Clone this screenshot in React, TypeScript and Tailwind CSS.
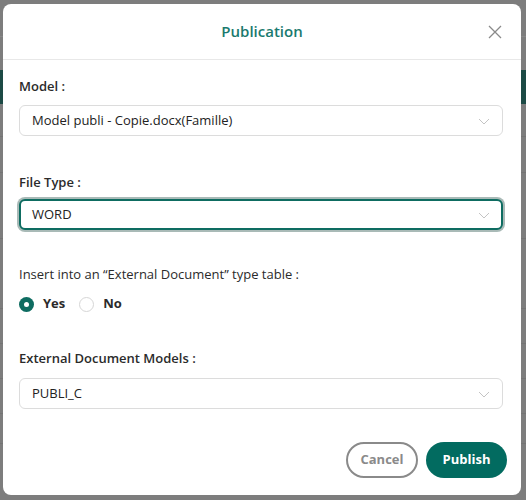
import React, { useState } from "react";
import clsx from "clsx";

const font = { fontFamily: '"Open Sans", "Noto Sans", Arial, sans-serif' };

function Chevron() {
  return (
    <svg width="12" height="12" viewBox="0 0 12 12" className="shrink-0">
      <path d="M1 4l5 5 5-5" fill="none" stroke="#c4c4c4" strokeWidth="1" />
    </svg>
  );
}

function Select({ value, focused }: { value: string; focused?: boolean }) {
  return (
    <div
      className={clsx(
        "flex items-center justify-between h-[31px] rounded-md bg-white text-[13px] text-[#222]",
        focused
          ? "border-2 border-[#0e6c61] shadow-[0_0_0_2px_#a9bab7] pl-[11px] pr-[11px]"
          : "border border-[#dcdcdc] pl-3 pr-3"
      )}
    >
      <span>{value}</span>
      <Chevron />
    </div>
  );
}

function Label({ children, bold = true }: { children: React.ReactNode; bold?: boolean }) {
  return (
    <div
      className={clsx(
        "h-5 leading-5 text-[13px] text-[#2b2b2b]",
        bold ? "font-semibold" : "font-normal"
      )}
    >
      {children}
    </div>
  );
}

function Radio({ checked, label, onClick }: { checked: boolean; label: string; onClick: () => void }) {
  return (
    <button type="button" className="flex items-center gap-[9px]" onClick={onClick}>
      <span
        className={clsx(
          "w-[15px] h-[15px] rounded-full flex items-center justify-center",
          checked ? "bg-[#0e6c61]" : "border border-[#d6d6d6] bg-white"
        )}
      >
        {checked ? <span className="w-[5px] h-[5px] rounded-full bg-white" /> : null}
      </span>
      <span className="text-[13px] font-bold text-[#2b2b2b]">{label}</span>
    </button>
  );
}

export default function App() {
  const [insert, setInsert] = useState(true);

  return (
    <div className="relative w-[526px] h-[500px] overflow-hidden bg-[#7d7d7d]" style={font}>
      {/* app behind the overlay */}
      <div className="flex flex-col">
        <div className="h-[36px]" />
        <div className="h-[34px] border-t border-[#888]" />
        <div className="h-[34px] bg-[#1c4a45]" />
        <div className="h-[33px] border-b border-[#747474]" />
        <div className="h-[36px] border-b border-[#747474]" />
        <div className="h-[66px] border-b border-[#747474]" />
        <div className="h-[70px] border-b border-[#747474]" />
        <div className="h-[35px] border-b border-[#747474]" />
        <div className="h-[35px] border-b border-[#747474]" />
        <div className="h-[35px] border-b border-[#747474]" />
        <div className="h-[30px] border-b border-[#747474]" />
        <div className="flex h-[30px]">
          <div className="w-[194px] border-r border-[#6e6e6e]" />
          <div className="w-[166px] border-r border-[#6e6e6e] pl-[11px] pt-[8px] text-[13px] text-[#333]">
            A-023
          </div>
        </div>
      </div>

      {/* modal */}
      <div className="absolute left-[3px] top-[4px] w-[518px] h-[491px] bg-white rounded-lg flex flex-col">
        <div className="relative h-[56px] flex items-center justify-center border-b border-[#e8e8e8]">
          <span className="text-[15px] font-semibold text-[#1a7a6e]">Publication</span>
          <button type="button" className="absolute right-[19px] top-[21px] w-[14px] h-[14px]">
            <svg width="14" height="14" viewBox="0 0 14 14">
              <path d="M1 1l12 12M13 1L1 13" stroke="#8a8a8a" strokeWidth="1.3" />
            </svg>
          </button>
        </div>

        <div className="flex flex-col pl-4 pr-[18px] pt-4 pb-[17px] flex-1">
          <Label>Model :</Label>
          <div className="mt-[9px]">
            <Select value="Model publi - Copie.docx(Famille)" />
          </div>

          <div className="mt-[36px]">
            <Label>File Type :</Label>
          </div>
          <div className="mt-[7px]">
            <Select value="WORD" focused />
          </div>

          <div className="mt-[34px]">
            <Label bold={false}>Insert into an “External Document” type table :</Label>
          </div>
          <div className="mt-[10px] h-5 flex items-center gap-[14px]">
            <Radio checked={insert} label="Yes" onClick={() => setInsert(true)} />
            <Radio checked={!insert} label="No" onClick={() => setInsert(false)} />
          </div>

          <div className="mt-[34px]">
            <Label>External Document Models :</Label>
          </div>
          <div className="mt-[10px]">
            <Select value="PUBLI_C" />
          </div>

          <div className="mt-auto flex justify-end gap-[8px] -mr-[4px]">
            <button
              type="button"
              className="h-[36px] w-[72px] rounded-full border-2 border-[#8a8a8a] text-[13px] font-bold text-[#8a8a8a]"
            >
              Cancel
            </button>
            <button
              type="button"
              className="h-[36px] w-[81px] rounded-full bg-[#026b60] text-[13px] font-bold text-white"
            >
              Publish
            </button>
          </div>
        </div>
      </div>
    </div>
  );
}
